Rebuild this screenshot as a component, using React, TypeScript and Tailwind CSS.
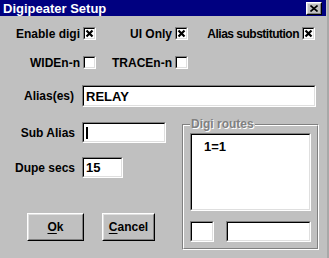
import React from "react";

function Sunken({ className = "", innerClassName = "", children }: { className?: string; innerClassName?: string; children?: React.ReactNode }) {
  return (
    <div className={"border border-t-[#808080] border-l-[#808080] border-b-white border-r-white " + className}>
      <div className={"h-full w-full border border-t-black border-l-black border-b-[#dfdfdf] border-r-[#dfdfdf] bg-white " + innerClassName}>
        {children}
      </div>
    </div>
  );
}

function Raised({ className = "", children }: { className?: string; children?: React.ReactNode }) {
  return (
    <div className={"border border-t-white border-l-white border-b-black border-r-black bg-[#c0c0c0] " + className}>
      <div className="h-full w-full border border-t-[#dfdfdf] border-l-[#dfdfdf] border-b-[#808080] border-r-[#808080] flex items-center justify-center">
        {children}
      </div>
    </div>
  );
}

function Check({ checked }: { checked: boolean }) {
  return (
    <Sunken className="w-[13px] h-[13px] shrink-0">
      {checked && (
        <svg width="9" height="9" viewBox="0 0 9 9" className="block">
          <path d="M1.5 1.5 L7.5 7.5 M7.5 1.5 L1.5 7.5" stroke="black" strokeWidth="2.2" fill="none" />
        </svg>
      )}
    </Sunken>
  );
}

function CheckItem({ label, checked, w, tight }: { label: string; checked: boolean; w: string; tight?: boolean }) {
  return (
    <div className={"flex items-center justify-end gap-[3px] " + w}>
      <span className={"whitespace-nowrap leading-none " + (tight ? "tracking-[-0.5px]" : "")}>{label}</span>
      <Check checked={checked} />
    </div>
  );
}

export default function App() {
  return (
    <div className="w-[329px] h-[258px] bg-[#c0c0c0] overflow-hidden flex font-['Liberation_Sans',Arial,sans-serif] font-bold text-[12px] text-black">
      <div className="w-[326px] flex flex-col">
        <div className="h-[16px] bg-[#000080] flex items-center pl-[3px] pr-[2px] w-[329px]">
          <span className="text-white text-[13px] leading-none">Digipeater Setup</span>
          <Raised className="ml-auto w-[16px] h-[13px] mr-[5px]">
            <svg width="8" height="7" viewBox="0 0 8 7" className="block">
              <path d="M0.5 0.5 L7.5 6.5 M7.5 0.5 L0.5 6.5" stroke="black" strokeWidth="1.6" fill="none" />
            </svg>
          </Raised>
        </div>

        <div className="flex h-[13px] mt-[11px] items-center">
          <CheckItem label="Enable digi" checked w="w-[96px]" />
          <CheckItem label="UI Only" checked w="w-[92px]" />
          <CheckItem label="Alias substitution" checked w="w-[127px]" tight />
        </div>

        <div className="flex h-[13px] mt-[16px] items-center">
          <CheckItem label="WIDEn-n" checked={false} w="w-[96px]" />
          <CheckItem label="TRACEn-n" checked={false} w="w-[92px]" />
        </div>

        <div className="flex h-[22px] mt-[16px] items-center">
          <div className="w-[74px] text-right whitespace-nowrap">Alias(es)</div>
          <Sunken className="ml-[8px] w-[234px] h-[22px]" innerClassName="flex items-center pl-[2px]">
            <span className="leading-none text-[13px]">RELAY</span>
          </Sunken>
        </div>

        <div className="flex mt-[15px]">
          <div className="w-[182px] flex flex-col">
            <div className="flex h-[21px] items-center">
              <div className="w-[75px] text-right whitespace-nowrap">Sub Alias</div>
              <Sunken className="ml-[7px] w-[84px] h-[21px]" innerClassName="flex items-center pl-[2px]">
                <div className="w-[2px] h-[12px] bg-black" />
              </Sunken>
            </div>
            <div className="flex h-[21px] mt-[14px] items-center">
              <div className="w-[75px] text-right whitespace-nowrap">Dupe secs</div>
              <Sunken className="ml-[7px] w-[41px] h-[21px]" innerClassName="flex items-center pl-[2px]">
                <span className="leading-none text-[13px]">15</span>
              </Sunken>
            </div>
            <div className="flex mt-[35px]">
              <Raised className="ml-[27px] w-[57px] h-[28px]">
                <span><span className="underline underline-offset-2">O</span>k</span>
              </Raised>
              <Raised className="ml-[18px] w-[53px] h-[28px]">
                <span><span className="underline underline-offset-2">C</span>ancel</span>
              </Raised>
            </div>
          </div>

          <div className="relative mt-[2px] w-[137px] h-[126px] border border-t-[#808080] border-l-[#808080] border-b-white border-r-white">
            <div className="h-full w-full border border-t-white border-l-white border-b-[#808080] border-r-[#808080] flex flex-col pl-[6px] pr-[6px] pt-[7px]">
              <Sunken className="w-[121px] h-[78px]" innerClassName="pl-[12px] pt-[3px]">
                <span className="leading-[14px] text-[13px]">1=1</span>
              </Sunken>
              <div className="flex mt-[10px]">
                <Sunken className="w-[24px] h-[21px]" />
                <Sunken className="ml-[12px] w-[85px] h-[21px]" />
              </div>
            </div>
            <div className="absolute left-[7px] top-[-7px] px-[1px] bg-[#c0c0c0] text-[#808080] leading-none [text-shadow:1px_1px_0_#ffffff]">
              Digi routes
            </div>
          </div>
        </div>
      </div>
      <div className="w-[3px] h-full bg-[#c0c0c0] border-r-[2px] border-r-[#a8a8a8]" />
    </div>
  );
}
